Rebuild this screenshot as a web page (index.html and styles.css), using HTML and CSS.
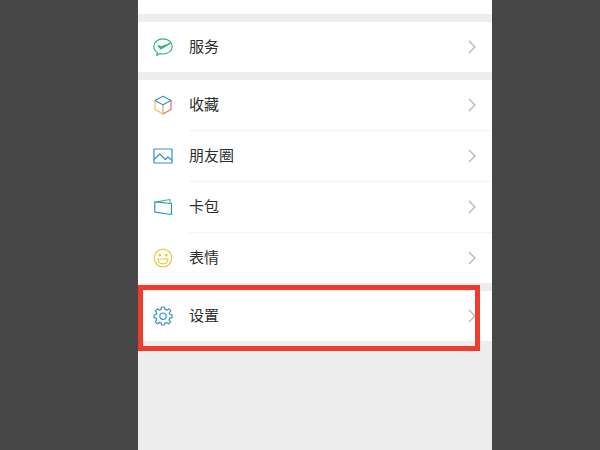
FILE: index.html
```
<!DOCTYPE html>
<html lang="zh-CN">
<head>
    <meta charset="UTF-8">
    <meta name="viewport" content="width=device-width, initial-scale=1.0">
    <title>设置</title>
    <link rel="stylesheet" href="styles.css">
</head>
<body>
    <main class="screen">
        <div class="profile"></div>

        <nav class="group">
            <a href="#" class="item">
                <svg class="icon" viewBox="0 0 20 20" stroke="#35b67c">
                    <path d="M4.300 15.500C2.200 14.200 .8 11.900 .8 9.400C.8 5 4.900 1.800 10 1.800s9.200 3.200 9.200 7.600s-4.100 7.600-9.200 7.600c-1 0-2-.1-2.900-.4L3.800 18.600z"/>
                    <path d="M5.200 8.600l2.400 3.400L17.600 6.200L8.200 9.800z" fill="#35b67c"/>
                </svg>
                <span class="label">服务</span>
                <svg class="arrow" viewBox="0 0 8 14"><path d="M1 1l6 6l-6 6"/></svg>
            </a>
        </nav>

        <nav class="group">
            <a href="#" class="item">
                <svg class="icon" viewBox="0 0 20 20">
                    <path d="M2 5.500V14.500L10 19" stroke="#efc050"/>
                    <path d="M18 5.500V14.500L10 19" stroke="#e8705f"/>
                    <path d="M10 19V9.800" stroke="#efa050"/>
                    <path d="M2 5.500L10 1.200L18 5.500L10 9.800z" stroke="#3d8fd0"/>
                </svg>
                <span class="label">收藏</span>
                <svg class="arrow" viewBox="0 0 8 14"><path d="M1 1l6 6l-6 6"/></svg>
            </a>
            <a href="#" class="item">
                <svg class="icon" viewBox="0 0 20 20" stroke="#3a8ecb">
                    <path d="M1 3h18v14H1z"/>
                    <path d="M1 13.500L6.800 8L12.500 13.500L15 11L19 14.500"/>
                </svg>
                <span class="label">朋友圈</span>
                <svg class="arrow" viewBox="0 0 8 14"><path d="M1 1l6 6l-6 6"/></svg>
            </a>
            <a href="#" class="item">
                <svg class="icon" viewBox="0 0 20 20">
                    <path d="M3.500 4.800L17 2.500V6" stroke="#4dba85"/>
                    <path d="M1.800 4.800L18.500 6.500V17.500L1.800 15.200z" stroke="#2f96c4"/>
                </svg>
                <span class="label">卡包</span>
                <svg class="arrow" viewBox="0 0 8 14"><path d="M1 1l6 6l-6 6"/></svg>
            </a>
            <a href="#" class="item">
                <svg class="icon" viewBox="0 0 20 20" stroke="#e6cb48">
                    <circle cx="10" cy="10" r="8.800"/>
                    <path d="M5 11h10c0 3-2.200 4.800-5 4.800S5 14 5 11z"/>
                    <circle cx="6.800" cy="7.200" r=".8" fill="#e6cb48"/>
                    <circle cx="13.200" cy="7.200" r=".8" fill="#e6cb48"/>
                </svg>
                <span class="label">表情</span>
                <svg class="arrow" viewBox="0 0 8 14"><path d="M1 1l6 6l-6 6"/></svg>
            </a>
        </nav>

        <nav class="group marked">
            <a href="#" class="item">
                <svg class="icon" viewBox="0 0 20 20" stroke="#3a8fc0">
                    <path d="M8.500 1h3l.5 2.400l1.800.8L15.900 2.800l1.900 2L16.300 7l.6 1.500L19 9v2.600l-2.200.5l-.7 1.600l1.400 2.200l-1.900 1.900l-2.200-1.300l-1.500.6L11.400 19H8.600l-.5-2l-1.600-.6l-2.200 1.400l-2-2l1.400-2.100L3 12.100L1 11.600V9l2.200-.5L3.800 7L2.300 4.800l2-2l2.100 1.400L8 3.400z"/>
                    <circle cx="10" cy="10.200" r="3.200"/>
                </svg>
                <span class="label">设置</span>
                <svg class="arrow" viewBox="0 0 8 14"><path d="M1 1l6 6l-6 6"/></svg>
            </a>
            <div class="highlight"></div>
        </nav>
    </main>
</body>
</html>
```
FILE: styles.css
```
* {
    box-sizing: border-box;
}

body {
    margin: 0;
    background-color: #474747;
    font-family: "Noto Sans CJK SC", sans-serif;
    color: #2e2e2e;
}

.screen {
    display: flex;
    flex-direction: column;
    gap: 8px;
    min-height: 100vh;
    margin: 0 18% 0 23%;
    background-color: #ededed;
}

/* Bottom edge of the profile card */
.profile {
    height: 14px;
    background-color: #ffffff;
}

.group {
    background-color: #ffffff;
}

.item {
    display: flex;
    align-items: center;
    height: 50px;
    padding: 0 16px 0 15px;
    color: inherit;
    text-decoration: none;
}

/* Divider starts at the label, not at the icon */
.item + .item {
    height: 51px;
    border-top: 1px solid transparent;
    background: linear-gradient(#f3f3f3, #f3f3f3) 51px 0 / 100% 1px no-repeat border-box;
}

.icon {
    width: 20px;
    height: 20px;
    fill: none;
    stroke-width: 1.2;
    stroke-linejoin: round;
}

.label {
    flex: 1;
    margin-left: 16px;
    padding-bottom: 2px;
    font-size: 15px;
    line-height: 24px;
}

.arrow {
    width: 8px;
    height: 14px;
    fill: none;
    stroke: #b8b8b8;
    stroke-width: 1.4;
}

/* Red frame around the settings row */
.marked {
    position: relative;
}

.highlight {
    position: absolute;
    top: -6px;
    right: 12px;
    bottom: -10px;
    left: 0;
    border: 5px solid #f03c2e;
    pointer-events: none;
}
```
